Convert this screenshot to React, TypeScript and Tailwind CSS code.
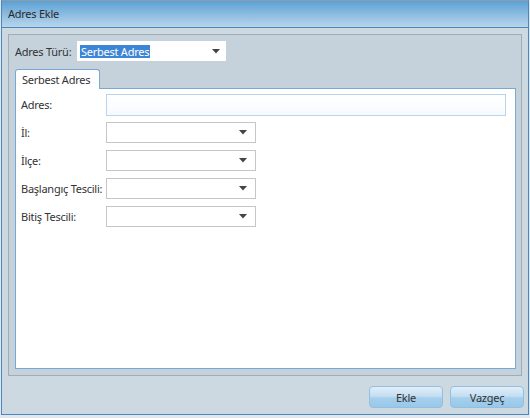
import React from "react";

const font = { fontFamily: '"Noto Sans", "Open Sans", sans-serif', letterSpacing: "-0.25px" };

function Arrow() {
  return (
    <svg width="8" height="5" viewBox="0 0 8 5" className="block">
      <path d="M0 0 H8 L4 4.5 Z" fill="#444" />
    </svg>
  );
}

function Select({ w = 150 }: { w?: number }) {
  return (
    <div
      className="h-[21px] bg-white border border-[#c6c6c6] flex items-center justify-end pr-[8px]"
      style={{ width: w }}
    >
      <Arrow />
    </div>
  );
}

function Row({ label, children }: { label: string; children: React.ReactNode }) {
  return (
    <div className="flex items-center h-[21px]">
      <div className="w-[85px] shrink-0 whitespace-nowrap text-[11px] text-[#333] leading-none">{label}</div>
      {children}
    </div>
  );
}

export default function App() {
  return (
    <div className="w-[530px] h-[418px] bg-[#e3e7eb]" style={font}>
      <div className="ml-px w-[528px] h-[415px] border-x border-b border-x-[#4a86c0] border-b-[#4a86c0] border-t border-t-[#8f9aa4] flex flex-col">
        <div className="h-[27px] bg-gradient-to-b from-[#5aa1d5] to-[#b8d5ea] border-b border-[#4a86c0] flex items-center pl-[6px] text-[11px] text-[#2b2b2b]">
          Adres Ekle
        </div>
        <div className="flex-1 bg-[#cdd9e1] pt-[6px] pl-[6px] flex flex-col">
          <div className="w-[514px] h-[342px] border border-[#a2acb4] bg-[#c5d2db] pt-[6px] pl-[6px] pr-[5px] pb-[6px] flex flex-col">
            <div className="flex items-center h-[20px]">
              <div className="w-[62px] shrink-0 whitespace-nowrap text-[11px] text-[#333] leading-none">Adres Türü:</div>
              <div className="w-[149px] h-[20px] bg-white flex items-center pl-[3px] pr-[6px]">
                <span className="bg-[#3d86d6] text-white text-[11px] leading-[13px] h-[13px] px-px whitespace-nowrap">Serbest Adres</span>
                <div className="flex-1" />
                <Arrow />
              </div>
            </div>
            <div className="mt-[8px] flex">
              <div className="w-[85px] h-[20px] bg-white border border-b-0 border-[#78a9d4] rounded-t-[3px] flex items-center pl-[6px] text-[11px] text-[#333] leading-none relative z-10 -mb-px whitespace-nowrap">
                Serbest Adres
              </div>
            </div>
            <div className="flex-1 bg-white border border-[#78a9d4] pt-[5px] pl-[5px] flex flex-col gap-[7px]">
              <Row label="Adres:">
                <div className="w-[400px] h-[22px] border border-[#b9d5ed] bg-gradient-to-b from-[#ffffff] to-[#f7fafd]" />
              </Row>
              <Row label="İl:">
                <Select />
              </Row>
              <Row label="İlçe:">
                <Select />
              </Row>
              <Row label="Başlangıç Tescili:">
                <Select />
              </Row>
              <Row label="Bitiş Tescili:">
                <Select />
              </Row>
            </div>
          </div>
          <div className="mt-[10px] flex justify-end gap-[7px] pr-[4px]">
            {["Ekle", "Vazgeç"].map((t) => (
              <div
                key={t}
                className="w-[74px] h-[22px] rounded-[4px] border border-[#92c0e3] flex items-center justify-center text-[11px] text-[#333] leading-none"
                style={{ backgroundImage: "linear-gradient(to bottom, #e2eef8 0%, #c4def2 45%, #a6cfec 55%, #98c8e9 100%)" }}
              >
                {t}
              </div>
            ))}
          </div>
        </div>
      </div>
    </div>
  );
}
